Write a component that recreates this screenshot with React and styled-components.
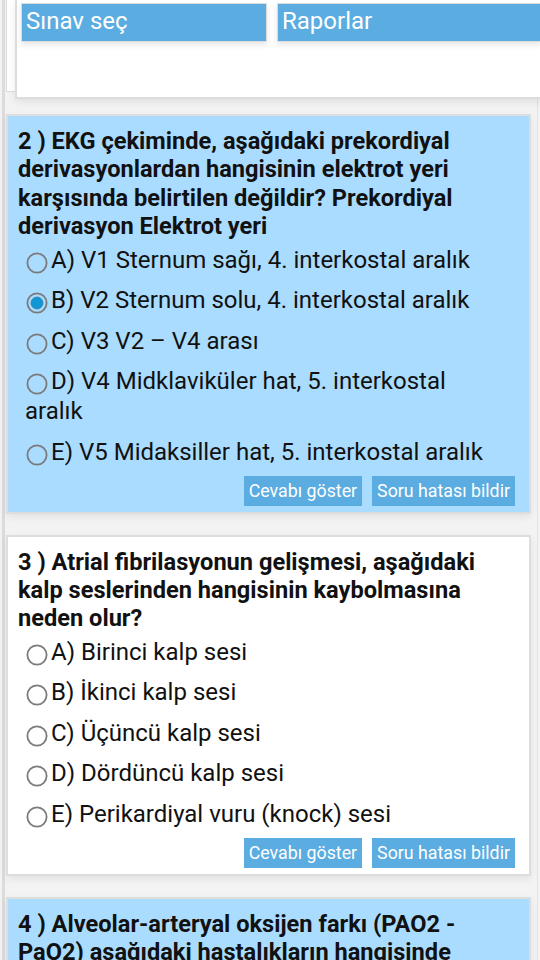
import React from 'react';
import styled, { createGlobalStyle } from 'styled-components';

//Data
const questions = [
  {
    no: 2,
    active: true,
    text: 'EKG çekiminde, aşağıdaki prekordiyal derivasyonlardan hangisinin elektrot yeri karşısında belirtilen değildir? Prekordiyal derivasyon Elektrot yeri',
    options: [
      'A) V1 Sternum sağı, 4. interkostal aralık',
      'B) V2 Sternum solu, 4. interkostal aralık',
      'C) V3 V2 – V4 arası',
      'D) V4 Midklaviküler hat, 5. interkostal aralık',
      'E) V5 Midaksiller hat, 5. interkostal aralık',
    ],
    selected: 1,
  },
  {
    no: 3,
    active: false,
    text: 'Atrial fibrilasyonun gelişmesi, aşağıdaki kalp seslerinden hangisinin kaybolmasına neden olur?',
    options: [
      'A) Birinci kalp sesi',
      'B) İkinci kalp sesi',
      'C) Üçüncü kalp sesi',
      'D) Dördüncü kalp sesi',
      'E) Perikardiyal vuru (knock) sesi',
    ],
    selected: -1,
  },
  {
    no: 4,
    active: true,
    text: 'Alveolar-arteryal oksijen farkı (PAO2 - PaO2) aşağıdaki hastalıkların hangisinde normaldir?',
    options: [],
    selected: -1,
  },
];

function Radio({ checked }) {
  return (
    <SDRadio viewBox="0 0 22 22">
      <circle cx="11" cy="11" r="9.6" fill="none" stroke="#7b7b7b" strokeWidth="1.8" />
      {checked && <circle cx="11" cy="11" r="6" fill="#0f98d3" stroke="#3a7fa3" strokeWidth="0.8" />}
    </SDRadio>
  );
}

function Question({ q }) {
  return (
    <SDCard active={q.active}>
      <SDBody>
        <SDQuestion>
          {q.no} ) {q.text}
        </SDQuestion>
        {q.options.map((o, i) => (
          <SDOption key={o}>
            <Radio checked={i === q.selected} />
            {o}
          </SDOption>
        ))}
      </SDBody>
      {q.options.length > 0 && (
        <SDActions>
          <SDSmallButton>Cevabı göster</SDSmallButton>
          <SDSmallButton>Soru hatası bildir</SDSmallButton>
        </SDActions>
      )}
    </SDCard>
  );
}

export default function App() {
  return (
    <>
      <GlobalStyle />
      <SDFrame>
        <SDTopPanel>
          <SDTopCard>
            <SDMenuButton width={246}>Sınav seç</SDMenuButton>
            <SDMenuButton width={264}>Raporlar</SDMenuButton>
          </SDTopCard>
        </SDTopPanel>
        {questions.map((q) => (
          <Question key={q.no} q={q} />
        ))}
      </SDFrame>
    </>
  );
}

//Styled components
const GlobalStyle = createGlobalStyle`
  html, body {
    margin: 0;
    background: #f3f3f3;
    overflow-x: hidden;
    font-family: Roboto, "Liberation Sans", sans-serif;
  }
`;

const SDFrame = styled.div`
  box-sizing: border-box;
  width: 536px;
  min-height: 960px;
  margin-left: 2px;
  padding-left: 1px;
  border-left: 3px solid #dcdcdc;
  border-right: 1px solid #e2e2e2;
`;

const SDTopPanel = styled.div`
  box-sizing: border-box;
  height: 92px;
  padding-left: 8px;
  background: #fff;
  border-left: 1px solid #dcdcdc;
  border-bottom: 1px solid #dcdcdc;
`;

const SDTopCard = styled.div`
  box-sizing: border-box;
  position: relative;
  display: flex;
  gap: 10px;
  align-items: flex-start;
  width: 545px;
  height: 99px;
  padding: 3px 4px 0;
  background: #fff;
  border: 2px solid #dddddd;
  border-top: none;
  box-shadow: 0 3px 8px rgba(0, 0, 0, 0.08);
`;

const SDMenuButton = styled.div`
  box-sizing: border-box;
  flex: none;
  width: ${(p) => p.width}px;
  height: 39px;
  padding-left: 4px;
  background: #5aace1;
  border: 1.5px solid #dcdcdc;
  box-shadow: 0 3px 6px rgba(0, 0, 0, 0.1);
  color: #fff;
  font-size: 24px;
  line-height: 35px;
`;

const SDCard = styled.div`
  box-sizing: border-box;
  width: 525px;
  margin-top: 22px;
  padding: 11px 14px 6px 10px;
  background: ${(p) => (p.active ? '#aadcff' : '#ffffff')};
  border: 2px solid #dddddd;
  box-shadow: 0 3px 8px rgba(0, 0, 0, 0.07);
  & + & {
    margin-top: 21px;
  }
`;

const SDBody = styled.div`
  padding-right: 15px;
  color: #111;
`;

const SDQuestion = styled.div`
  margin-bottom: 4px;
  font-size: 23.6px;
  font-weight: bold;
  line-height: 28.4px;
`;

const SDOption = styled.div`
  padding-left: 7px;
  margin-bottom: 10.5px;
  font-size: 24px;
  line-height: 30px;
  &:last-child {
    margin-bottom: 9px;
  }
`;

const SDRadio = styled.svg`
  width: 22px;
  height: 22px;
  margin: 0 3px 0 1px;
  vertical-align: -6px;
`;

const SDActions = styled.div`
  display: flex;
  justify-content: flex-end;
  gap: 10px;
`;

const SDSmallButton = styled.div`
  height: 30px;
  padding: 0 5px;
  background: #5aace1;
  color: #fff;
  font-size: 17.8px;
  line-height: 30px;
  white-space: nowrap;
`;
